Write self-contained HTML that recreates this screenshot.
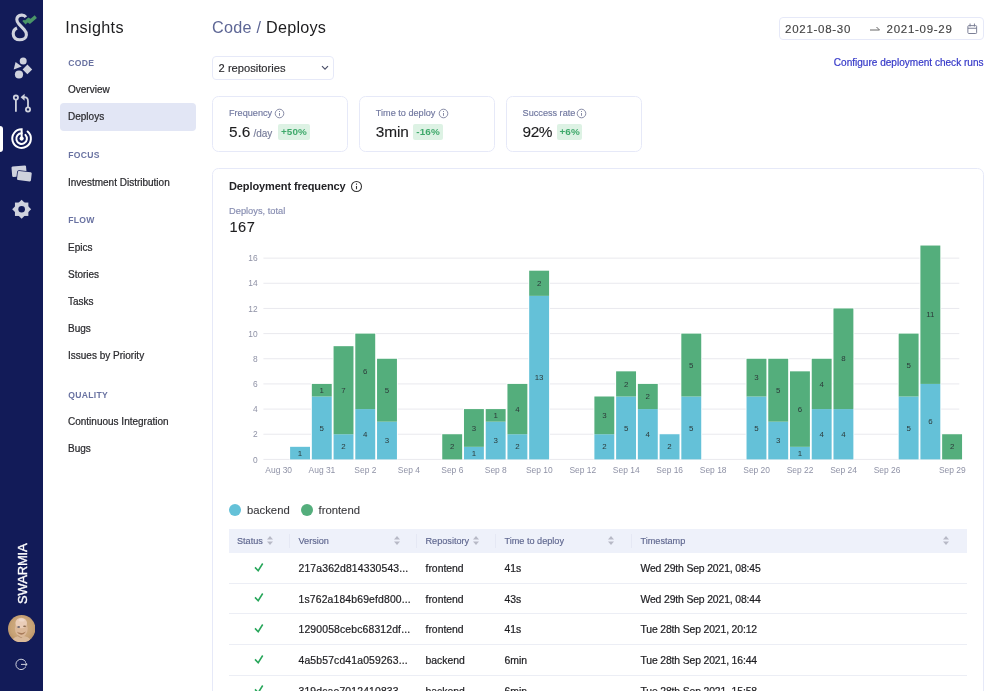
<!DOCTYPE html>
<html lang="en">
<head>
<meta charset="utf-8">
<title>Insights - Code / Deploys</title>
<style>
*{box-sizing:border-box;margin:0;padding:0}
html,body{width:1000px;height:691px;overflow:hidden;background:#fff}
#wrap{position:absolute;left:0;top:0;width:1000px;height:691px;will-change:transform}
body{font-family:"Liberation Sans",sans-serif;color:#222;position:relative;-webkit-font-smoothing:antialiased}
.abs{position:absolute}
/* left rail */
#rail{position:absolute;left:0;top:0;width:43.3px;height:691px;background:#121b58}
#rail svg{position:absolute}
#rail .active{position:absolute;left:0;top:125.6px;width:3.3px;height:26.8px;background:#fff;border-radius:0 3px 3px 0}
#brand{position:absolute;left:14.9px;top:603.6px;width:0;height:0;font-size:13px;font-weight:400;color:#fff;letter-spacing:-.15px;white-space:nowrap;-webkit-text-stroke:.35px #fff}
#brand{transform:rotate(-90deg);transform-origin:0 0}
#avatar{position:absolute;left:8px;top:614.7px;width:27.4px;height:27.4px;border-radius:50%;background:radial-gradient(circle at 52% 42%,#e6c9a8 0,#d9b48e 35%,#c69e77 60%,#b78d66 100%)}
/* sidebar */
#side{position:absolute;left:44px;top:0;width:160px;height:691px}
#side h1{position:absolute;left:21.3px;top:17.8px;font-size:16.2px;font-weight:400;color:#1d1d1f;letter-spacing:.35px;line-height:19px}
.sec{position:absolute;left:24.2px;font-size:8.6px;line-height:12px;font-weight:700;color:#6972a1;letter-spacing:.3px;white-space:nowrap}
.it{position:absolute;left:16px;width:136px;height:27px;line-height:27px;padding-left:8px;font-size:10px;color:#2a2a2e;border-radius:4px}
.hl{position:absolute;left:16px;top:103.3px;width:135.6px;height:27.4px;border-radius:4px;background:#e2e6f5}
/* main */
#title{position:absolute;left:212px;top:18px;font-size:16.2px;line-height:19px;letter-spacing:.25px;color:#1d1d1f;white-space:nowrap}
#title span{color:#5d6695}
#sel{position:absolute;left:212px;top:56px;width:122px;height:23.5px;border:1px solid #e6e9f8;border-radius:4px;font-size:11.15px;line-height:22px;padding-left:5.6px;color:#2a2a2e}
#date{position:absolute;left:778.5px;top:17px;width:205px;height:23px;border:1px solid #e6e9f8;border-radius:4px;font-size:11.5px;line-height:22.5px;color:#444;letter-spacing:.73px}
#cfg{position:absolute;right:16.5px;top:57.1px;font-size:10.05px;color:#3538c8;-webkit-text-stroke:.2px #3538c8;white-space:nowrap}
.card{position:absolute;top:96px;width:136px;height:56px;border:1px solid #e6e9f8;border-radius:6.5px}
.card .lb{position:absolute;left:16px;top:10.5px;font-size:9.15px;color:#70779f;white-space:nowrap}
.card .val{position:absolute;left:16px;top:26.4px;font-size:15.4px;color:#1d1d1f;white-space:nowrap;line-height:18px}
.card .unit{font-size:10px;color:#767b98}
.badge{position:absolute;top:27px;height:16px;line-height:16px;border-radius:2px;background:#ddf2e4;color:#3fa96b;font-size:9.9px;font-weight:700;text-align:center;letter-spacing:.15px}
#big{position:absolute;left:212px;top:168px;width:772px;height:560px;border:1px solid #e6e9f8;border-radius:6.5px}
#h2{position:absolute;left:229px;top:179.8px;font-size:11px;letter-spacing:-.1px;font-weight:700;color:#232326;white-space:nowrap}
#tot-l{position:absolute;left:229px;top:206px;font-size:9.3px;color:#868cb0;white-space:nowrap}
#tot{position:absolute;left:229.5px;top:219px;font-size:14.6px;color:#1d1d1f;letter-spacing:.5px}
#chart{position:absolute;left:0;top:0;width:1000px;height:691px;pointer-events:none}
#chart text{font-family:"Liberation Sans",sans-serif}
.yl{font-size:8.4px;fill:#8f92a6}
.xl{font-size:8.45px;fill:#8f92a6}
.bl{font-size:7.9px;fill:#2c3a3a}
.lg{position:absolute;top:503.5px;font-size:11.3px;color:#3a3a3e;white-space:nowrap}
.dot{position:absolute;top:504px;width:12px;height:12px;border-radius:50%}
#thead{position:absolute;left:229px;top:528.7px;width:738px;height:24.3px;background:#eef1fa}
.th{position:absolute;top:0;height:24px;line-height:24.5px;font-size:9.15px;color:#5f678f;white-space:nowrap}
.vd{position:absolute;top:5px;width:1px;height:14px;background:#e5e8f4}
.sort{position:absolute;top:7.5px;width:6px;height:9px}
.row{position:absolute;left:229px;width:738px;height:30.67px;border-bottom:1px solid #eceef5;font-size:10.4px;color:#1f1f23}
.row span{position:absolute;top:0;line-height:31px;white-space:nowrap}
.row span.v{letter-spacing:.15px}
.row span.ts{letter-spacing:-.14px}
.it,.row span{-webkit-text-stroke:.22px}
#sel,.th,#date,.card .lb,.card .unit,#tot-l{-webkit-text-stroke:.15px}
.lg,.card .val,#tot{-webkit-text-stroke:.12px}
.row svg{position:absolute;left:25.4px;top:8.8px}
</style>
</head>
<body>
<div id="wrap">

<div id="rail">
  <div class="active"></div>
  <svg style="left:0;top:0" width="44" height="691" viewBox="0 0 44 691">
  <!-- logo -->
  <path d="M25.9 17.2 C24.8 15.6 23.2 15 21.6 15.1 C18.9 15.3 16.9 17 16.8 19.4 C16.7 21.3 17.6 22.6 19 24.2 L24.2 29.6 C25.8 31.3 26.5 33 26.4 35 C26.2 38 23.3 39.8 19.7 39.8 C16 39.8 13.2 37.6 13.2 33.8 C13.2 31.1 14.6 29 17 28" fill="none" stroke="#cfd2dd" stroke-width="3.1" stroke-linecap="butt"/>
  <polygon points="22.3,20.9 25.5,24.4 27.7,22.5 29.9,24.1 36.9,18.1 34.7,15.2 30.6,18.7 28.3,17.4 25.2,20.3 23.6,20.0" fill="#4a9568"/>
  <!-- shapes -->
  <g fill="#cfd2dd">
    <circle cx="23.2" cy="61" r="3.5"/>
    <polygon points="15.6,62.1 21.7,66.5 13.7,69.4"/>
    <polygon points="27.4,64.6 32.2,69.4 27.4,74.2 22.6,69.4"/>
    <circle cx="19" cy="74.5" r="4.1"/>
  </g>
  <!-- pull request -->
  <g fill="none" stroke="#cfd2dd" stroke-width="1.8">
    <circle cx="15.9" cy="97.6" r="2.1"/>
    <path d="M15.9 100 V111.7"/>
    <circle cx="28" cy="109.4" r="2.1"/>
    <path d="M28 107 V101.2 C28 98.6 26.6 97.2 24 97.2 H23"/>
  </g>
  <polygon points="20.6,97.2 24.6,93.7 24.6,100.7" fill="#cfd2dd"/>
  <!-- radar (active) -->
  <g fill="none" stroke="#fff" stroke-width="2" stroke-linecap="round">
    <path d="M27.6 131.5 A9.3 9.3 0 1 1 21.65 129.3 V138.6" stroke-linejoin="miter"/>
    <path d="M25.4 134.9 A5.3 5.3 0 1 1 21.65 133.3"/>
  </g>
  <circle cx="21.65" cy="138.6" r="2.1" fill="#fff"/>
  <!-- cards -->
  <g fill="#cfd2dd">
    <rect x="11.8" y="166" width="14.6" height="10.6" rx="1.2" transform="rotate(-5 19 171)"/>
    <rect x="17.4" y="171.6" width="14" height="9.2" rx="1.2" transform="rotate(6.5 24.4 176.2)" stroke="#121b58" stroke-width="1.6" paint-order="stroke"/>
  </g>
  <!-- gear -->
  <g fill="#cfd2dd">
    <rect x="14.95" y="202.55" width="13.4" height="13.4"/>
    <rect x="14.95" y="202.55" width="13.4" height="13.4" transform="rotate(45 21.65 209.25)"/>
  </g>
  <circle cx="21.65" cy="209.25" r="3.3" fill="#121b58"/>
  <!-- logout -->
  <g fill="none" stroke="#cfd2dd" stroke-width="1">
    <path d="M25.6 661.8 A5.2 5.2 0 1 0 25.6 667"/>
    <path d="M21 664.4 H27 M25 662.4 L27.2 664.4 L25 666.4"/>
  </g>
</svg>

  <div id="brand">SWARMIA</div>
  <svg style="left:8px;top:614.6px" width="27.4" height="27.4" viewBox="0 0 27.4 27.4">
    <defs><clipPath id="avc"><circle cx="13.7" cy="13.7" r="13.7"/></clipPath>
    <radialGradient id="avg" cx="50%" cy="45%" r="55%"><stop offset="0" stop-color="#d3b086"/><stop offset=".7" stop-color="#c8a377"/><stop offset="1" stop-color="#ba9468"/></radialGradient></defs>
    <g clip-path="url(#avc)">
      <rect width="27.4" height="27.4" fill="url(#avg)"/>
      <ellipse cx="13.4" cy="25.5" rx="9" ry="4.5" fill="#d9b99a"/>
      <ellipse cx="13.3" cy="13.5" rx="6.4" ry="8.6" fill="#dcb99a"/>
      <ellipse cx="13.2" cy="8" rx="5.8" ry="5.2" fill="#eacdb8"/>
      <ellipse cx="13.6" cy="5" rx="3" ry="1.6" fill="#f0d9c9"/>
      <ellipse cx="10.7" cy="12" rx="1.5" ry=".8" fill="#4a4a5c"/>
      <ellipse cx="16.6" cy="11.2" rx="1.6" ry=".8" fill="#8a6a50"/>
      <path d="M8.8 16.6 C10.5 20.5 15.5 21 18 16.2 C16 18.3 11.5 18.8 8.8 16.6Z" fill="#a87c5a"/>
      <path d="M9.2 19.5 C10.5 22.5 13 23.2 14.5 22.5 C12.5 22 10.5 21 9.2 19.5Z" fill="#b08865"/>
    </g>
  </svg>

</div>

<div id="side">
  <h1>Insights</h1>
  <div class="hl"></div>
  <div class="sec" style="top:56.9px">CODE</div>
  <div class="it" style="top:76px">Overview</div>
  <div class="it" style="top:103px">Deploys</div>
  <div class="sec" style="top:149.2px">FOCUS</div>
  <div class="it" style="top:169px">Investment Distribution</div>
  <div class="sec" style="top:214.2px">FLOW</div>
  <div class="it" style="top:234px">Epics</div>
  <div class="it" style="top:261px">Stories</div>
  <div class="it" style="top:288px">Tasks</div>
  <div class="it" style="top:315px">Bugs</div>
  <div class="it" style="top:342px">Issues by Priority</div>
  <div class="sec" style="top:388.6px">QUALITY</div>
  <div class="it" style="top:408px">Continuous Integration</div>
  <div class="it" style="top:435px">Bugs</div>
</div>

<div id="title"><span>Code /</span> Deploys</div>
<div id="sel">2 repositories
  <svg class="abs" style="left:108px;top:7.8px" width="8" height="6" viewBox="0 0 8 6"><path d="M1 1.2 L4 4.2 L7 1.2" fill="none" stroke="#4a4f68" stroke-width="1.15"/></svg>
</div>

<div id="date">
  <span class="abs" style="left:5.5px;top:0">2021-08-30</span>
  <span class="abs" style="left:107px;top:0">2021-09-29</span>
  <svg class="abs" style="left:89px;top:7px" width="12" height="8" viewBox="0 0 12 8"><path d="M1 5 H10.5 L7.5 2" fill="none" stroke="#666" stroke-width="1"/></svg>
  <svg class="abs" style="left:187.5px;top:5px" width="10.5" height="11.4" viewBox="0 0 12 13"><rect x="1" y="3" width="10" height="9" rx="1" fill="none" stroke="#777b92" stroke-width="1.1"/><path d="M1 6 H11 M3.5 .6 V4 M8.5 .6 V4" stroke="#777b92" stroke-width="1.1" fill="none"/></svg>
</div>
<div id="cfg">Configure deployment check runs</div>

<div class="card" style="left:212px">
  <div class="lb">Frequency</div>
  <svg class="abs" style="left:60.5px;top:10.5px" width="11" height="11" viewBox="0 0 11 11"><circle cx="5.5" cy="5.5" r="4.3" fill="none" stroke="#7a7f9c" stroke-width=".9"/><path d="M5.5 5 V7.8 M5.5 3 V4" stroke="#7a7f9c" stroke-width=".9"/></svg>
  <div class="val">5.6<span class="unit" style="margin-left:3px">/day</span></div>
  <div class="badge" style="left:65px;width:32px">+50%</div>
</div>
<div class="card" style="left:358.8px">
  <div class="lb">Time to deploy</div>
  <svg class="abs" style="left:77.8px;top:10.5px" width="11" height="11" viewBox="0 0 11 11"><circle cx="5.5" cy="5.5" r="4.3" fill="none" stroke="#7a7f9c" stroke-width=".9"/><path d="M5.5 5 V7.8 M5.5 3 V4" stroke="#7a7f9c" stroke-width=".9"/></svg>
  <div class="val" style="letter-spacing:-.15px">3min</div>
  <div class="badge" style="left:53.3px;width:30px">-16%</div>
</div>
<div class="card" style="left:505.6px">
  <div class="lb">Success rate</div>
  <svg class="abs" style="left:69.8px;top:10.5px" width="11" height="11" viewBox="0 0 11 11"><circle cx="5.5" cy="5.5" r="4.3" fill="none" stroke="#7a7f9c" stroke-width=".9"/><path d="M5.5 5 V7.8 M5.5 3 V4" stroke="#7a7f9c" stroke-width=".9"/></svg>
  <div class="val" style="letter-spacing:-.5px">92%</div>
  <div class="badge" style="left:50.3px;width:25.5px">+6%</div>
</div>

<div id="big"></div>
<div id="h2">Deployment frequency</div>
<svg class="abs" style="left:350px;top:180px" width="13" height="13" viewBox="0 0 13 13"><circle cx="6.5" cy="6.5" r="5" fill="none" stroke="#333" stroke-width="1.05"/><path d="M6.5 6 V9.3 M6.5 3.6 V4.8" stroke="#333" stroke-width="1.1"/></svg>
<div id="tot-l">Deploys, total</div>
<div id="tot">167</div>

<svg id="chart" viewBox="0 0 1000 691">
<line x1="263.4" x2="959.3" y1="459.40" y2="459.40" stroke="#e9e9ee" stroke-width="1"/>
<text x="257.6" y="462.50" text-anchor="end" class="yl">0</text>
<line x1="263.4" x2="959.3" y1="434.24" y2="434.24" stroke="#e9e9ee" stroke-width="1"/>
<text x="257.6" y="437.34" text-anchor="end" class="yl">2</text>
<line x1="263.4" x2="959.3" y1="409.08" y2="409.08" stroke="#e9e9ee" stroke-width="1"/>
<text x="257.6" y="412.18" text-anchor="end" class="yl">4</text>
<line x1="263.4" x2="959.3" y1="383.92" y2="383.92" stroke="#e9e9ee" stroke-width="1"/>
<text x="257.6" y="387.02" text-anchor="end" class="yl">6</text>
<line x1="263.4" x2="959.3" y1="358.76" y2="358.76" stroke="#e9e9ee" stroke-width="1"/>
<text x="257.6" y="361.86" text-anchor="end" class="yl">8</text>
<line x1="263.4" x2="959.3" y1="333.60" y2="333.60" stroke="#e9e9ee" stroke-width="1"/>
<text x="257.6" y="336.70" text-anchor="end" class="yl">10</text>
<line x1="263.4" x2="959.3" y1="308.44" y2="308.44" stroke="#e9e9ee" stroke-width="1"/>
<text x="257.6" y="311.54" text-anchor="end" class="yl">12</text>
<line x1="263.4" x2="959.3" y1="283.28" y2="283.28" stroke="#e9e9ee" stroke-width="1"/>
<text x="257.6" y="286.38" text-anchor="end" class="yl">14</text>
<line x1="263.4" x2="959.3" y1="258.12" y2="258.12" stroke="#e9e9ee" stroke-width="1"/>
<text x="257.6" y="261.22" text-anchor="end" class="yl">16</text>
<rect x="289.20" y="445.92" width="21.70" height="13.48" fill="#fff"/>
<rect x="290.10" y="446.82" width="19.9" height="12.58" fill="#64c1d8"/>
<text x="300.05" y="455.71" text-anchor="middle" class="bl">1</text>
<rect x="310.94" y="383.02" width="21.70" height="76.38" fill="#fff"/>
<rect x="311.84" y="396.50" width="19.9" height="62.90" fill="#64c1d8"/>
<text x="321.79" y="430.55" text-anchor="middle" class="bl">5</text>
<rect x="311.84" y="383.92" width="19.9" height="12.58" fill="#54ae7c"/>
<text x="321.79" y="392.81" text-anchor="middle" class="bl">1</text>
<rect x="332.67" y="345.28" width="21.70" height="114.12" fill="#fff"/>
<rect x="333.57" y="434.24" width="19.9" height="25.16" fill="#64c1d8"/>
<text x="343.52" y="449.42" text-anchor="middle" class="bl">2</text>
<rect x="333.57" y="346.18" width="19.9" height="88.06" fill="#54ae7c"/>
<text x="343.52" y="392.81" text-anchor="middle" class="bl">7</text>
<rect x="354.41" y="332.70" width="21.70" height="126.70" fill="#fff"/>
<rect x="355.31" y="409.08" width="19.9" height="50.32" fill="#64c1d8"/>
<text x="365.25" y="436.84" text-anchor="middle" class="bl">4</text>
<rect x="355.31" y="333.60" width="19.9" height="75.48" fill="#54ae7c"/>
<text x="365.25" y="373.94" text-anchor="middle" class="bl">6</text>
<rect x="376.14" y="357.86" width="21.70" height="101.54" fill="#fff"/>
<rect x="377.04" y="421.66" width="19.9" height="37.74" fill="#64c1d8"/>
<text x="386.99" y="443.13" text-anchor="middle" class="bl">3</text>
<rect x="377.04" y="358.76" width="19.9" height="62.90" fill="#54ae7c"/>
<text x="386.99" y="392.81" text-anchor="middle" class="bl">5</text>
<rect x="441.35" y="433.34" width="21.70" height="26.06" fill="#fff"/>
<rect x="442.25" y="434.24" width="19.9" height="25.16" fill="#54ae7c"/>
<text x="452.19" y="449.42" text-anchor="middle" class="bl">2</text>
<rect x="463.08" y="408.18" width="21.70" height="51.22" fill="#fff"/>
<rect x="463.98" y="446.82" width="19.9" height="12.58" fill="#64c1d8"/>
<text x="473.93" y="455.71" text-anchor="middle" class="bl">1</text>
<rect x="463.98" y="409.08" width="19.9" height="37.74" fill="#54ae7c"/>
<text x="473.93" y="430.55" text-anchor="middle" class="bl">3</text>
<rect x="484.82" y="408.18" width="21.70" height="51.22" fill="#fff"/>
<rect x="485.72" y="421.66" width="19.9" height="37.74" fill="#64c1d8"/>
<text x="495.67" y="443.13" text-anchor="middle" class="bl">3</text>
<rect x="485.72" y="409.08" width="19.9" height="12.58" fill="#54ae7c"/>
<text x="495.67" y="417.97" text-anchor="middle" class="bl">1</text>
<rect x="506.55" y="383.02" width="21.70" height="76.38" fill="#fff"/>
<rect x="507.45" y="434.24" width="19.9" height="25.16" fill="#64c1d8"/>
<text x="517.40" y="449.42" text-anchor="middle" class="bl">2</text>
<rect x="507.45" y="383.92" width="19.9" height="50.32" fill="#54ae7c"/>
<text x="517.40" y="411.68" text-anchor="middle" class="bl">4</text>
<rect x="528.28" y="269.80" width="21.70" height="189.60" fill="#fff"/>
<rect x="529.18" y="295.86" width="19.9" height="163.54" fill="#64c1d8"/>
<text x="539.13" y="380.23" text-anchor="middle" class="bl">13</text>
<rect x="529.18" y="270.70" width="19.9" height="25.16" fill="#54ae7c"/>
<text x="539.13" y="285.88" text-anchor="middle" class="bl">2</text>
<rect x="593.49" y="395.60" width="21.70" height="63.80" fill="#fff"/>
<rect x="594.39" y="434.24" width="19.9" height="25.16" fill="#64c1d8"/>
<text x="604.34" y="449.42" text-anchor="middle" class="bl">2</text>
<rect x="594.39" y="396.50" width="19.9" height="37.74" fill="#54ae7c"/>
<text x="604.34" y="417.97" text-anchor="middle" class="bl">3</text>
<rect x="615.23" y="370.44" width="21.70" height="88.96" fill="#fff"/>
<rect x="616.12" y="396.50" width="19.9" height="62.90" fill="#64c1d8"/>
<text x="626.08" y="430.55" text-anchor="middle" class="bl">5</text>
<rect x="616.12" y="371.34" width="19.9" height="25.16" fill="#54ae7c"/>
<text x="626.08" y="386.52" text-anchor="middle" class="bl">2</text>
<rect x="636.96" y="383.02" width="21.70" height="76.38" fill="#fff"/>
<rect x="637.86" y="409.08" width="19.9" height="50.32" fill="#64c1d8"/>
<text x="647.81" y="436.84" text-anchor="middle" class="bl">4</text>
<rect x="637.86" y="383.92" width="19.9" height="25.16" fill="#54ae7c"/>
<text x="647.81" y="399.10" text-anchor="middle" class="bl">2</text>
<rect x="658.70" y="433.34" width="21.70" height="26.06" fill="#fff"/>
<rect x="659.60" y="434.24" width="19.9" height="25.16" fill="#64c1d8"/>
<text x="669.55" y="449.42" text-anchor="middle" class="bl">2</text>
<rect x="680.43" y="332.70" width="21.70" height="126.70" fill="#fff"/>
<rect x="681.33" y="396.50" width="19.9" height="62.90" fill="#64c1d8"/>
<text x="691.28" y="430.55" text-anchor="middle" class="bl">5</text>
<rect x="681.33" y="333.60" width="19.9" height="62.90" fill="#54ae7c"/>
<text x="691.28" y="367.65" text-anchor="middle" class="bl">5</text>
<rect x="745.63" y="357.86" width="21.70" height="101.54" fill="#fff"/>
<rect x="746.53" y="396.50" width="19.9" height="62.90" fill="#64c1d8"/>
<text x="756.49" y="430.55" text-anchor="middle" class="bl">5</text>
<rect x="746.53" y="358.76" width="19.9" height="37.74" fill="#54ae7c"/>
<text x="756.49" y="380.23" text-anchor="middle" class="bl">3</text>
<rect x="767.37" y="357.86" width="21.70" height="101.54" fill="#fff"/>
<rect x="768.27" y="421.66" width="19.9" height="37.74" fill="#64c1d8"/>
<text x="778.22" y="443.13" text-anchor="middle" class="bl">3</text>
<rect x="768.27" y="358.76" width="19.9" height="62.90" fill="#54ae7c"/>
<text x="778.22" y="392.81" text-anchor="middle" class="bl">5</text>
<rect x="789.10" y="370.44" width="21.70" height="88.96" fill="#fff"/>
<rect x="790.00" y="446.82" width="19.9" height="12.58" fill="#64c1d8"/>
<text x="799.95" y="455.71" text-anchor="middle" class="bl">1</text>
<rect x="790.00" y="371.34" width="19.9" height="75.48" fill="#54ae7c"/>
<text x="799.95" y="411.68" text-anchor="middle" class="bl">6</text>
<rect x="810.84" y="357.86" width="21.70" height="101.54" fill="#fff"/>
<rect x="811.74" y="409.08" width="19.9" height="50.32" fill="#64c1d8"/>
<text x="821.69" y="436.84" text-anchor="middle" class="bl">4</text>
<rect x="811.74" y="358.76" width="19.9" height="50.32" fill="#54ae7c"/>
<text x="821.69" y="386.52" text-anchor="middle" class="bl">4</text>
<rect x="832.57" y="307.54" width="21.70" height="151.86" fill="#fff"/>
<rect x="833.47" y="409.08" width="19.9" height="50.32" fill="#64c1d8"/>
<text x="843.42" y="436.84" text-anchor="middle" class="bl">4</text>
<rect x="833.47" y="308.44" width="19.9" height="100.64" fill="#54ae7c"/>
<text x="843.42" y="361.36" text-anchor="middle" class="bl">8</text>
<rect x="897.78" y="332.70" width="21.70" height="126.70" fill="#fff"/>
<rect x="898.68" y="396.50" width="19.9" height="62.90" fill="#64c1d8"/>
<text x="908.63" y="430.55" text-anchor="middle" class="bl">5</text>
<rect x="898.68" y="333.60" width="19.9" height="62.90" fill="#54ae7c"/>
<text x="908.63" y="367.65" text-anchor="middle" class="bl">5</text>
<rect x="919.51" y="244.64" width="21.70" height="214.76" fill="#fff"/>
<rect x="920.41" y="383.92" width="19.9" height="75.48" fill="#64c1d8"/>
<text x="930.37" y="424.26" text-anchor="middle" class="bl">6</text>
<rect x="920.41" y="245.54" width="19.9" height="138.38" fill="#54ae7c"/>
<text x="930.37" y="317.33" text-anchor="middle" class="bl">11</text>
<rect x="941.25" y="433.34" width="21.70" height="26.06" fill="#fff"/>
<rect x="942.15" y="434.24" width="19.9" height="25.16" fill="#54ae7c"/>
<text x="952.10" y="449.42" text-anchor="middle" class="bl">2</text>
<text x="278.7" y="473.3" text-anchor="middle" class="xl">Aug 30</text>
<text x="321.94" y="473.3" text-anchor="middle" class="xl">Aug 31</text>
<text x="365.4" y="473.3" text-anchor="middle" class="xl">Sep 2</text>
<text x="408.88" y="473.3" text-anchor="middle" class="xl">Sep 4</text>
<text x="452.34" y="473.3" text-anchor="middle" class="xl">Sep 6</text>
<text x="495.81" y="473.3" text-anchor="middle" class="xl">Sep 8</text>
<text x="539.28" y="473.3" text-anchor="middle" class="xl">Sep 10</text>
<text x="582.75" y="473.3" text-anchor="middle" class="xl">Sep 12</text>
<text x="626.23" y="473.3" text-anchor="middle" class="xl">Sep 14</text>
<text x="669.7" y="473.3" text-anchor="middle" class="xl">Sep 16</text>
<text x="713.16" y="473.3" text-anchor="middle" class="xl">Sep 18</text>
<text x="756.63" y="473.3" text-anchor="middle" class="xl">Sep 20</text>
<text x="800.1" y="473.3" text-anchor="middle" class="xl">Sep 22</text>
<text x="843.57" y="473.3" text-anchor="middle" class="xl">Sep 24</text>
<text x="887.04" y="473.3" text-anchor="middle" class="xl">Sep 26</text>
<text x="952.25" y="473.3" text-anchor="middle" class="xl">Sep 29</text>
</svg>

<div class="dot" style="left:229px;background:#64c1d8"></div>
<div class="lg" style="left:247px">backend</div>
<div class="dot" style="left:301px;background:#54ae7c"></div>
<div class="lg" style="left:318.5px">frontend</div>

<div id="thead">
  <div class="th" style="left:8px">Status</div>
  <div class="th" style="left:69.5px">Version</div>
  <div class="th" style="left:196.5px">Repository</div>
  <div class="th" style="left:275.5px">Time to deploy</div>
  <div class="th" style="left:411.5px">Timestamp</div>
  <div class="vd" style="left:60.3px"></div>
  <div class="vd" style="left:186.6px"></div>
  <div class="vd" style="left:265.6px"></div>
  <div class="vd" style="left:401.6px"></div>
  <svg class="sort" style="left:37.8px" viewBox="0 0 6 9"><path d="M0 3.6 L3 0 L6 3.6Z M0 5.4 L3 9 L6 5.4Z" fill="#b7b9c6"/></svg>
  <svg class="sort" style="left:164.6px" viewBox="0 0 6 9"><path d="M0 3.6 L3 0 L6 3.6Z M0 5.4 L3 9 L6 5.4Z" fill="#b7b9c6"/></svg>
  <svg class="sort" style="left:243.6px" viewBox="0 0 6 9"><path d="M0 3.6 L3 0 L6 3.6Z M0 5.4 L3 9 L6 5.4Z" fill="#b7b9c6"/></svg>
  <svg class="sort" style="left:379.2px" viewBox="0 0 6 9"><path d="M0 3.6 L3 0 L6 3.6Z M0 5.4 L3 9 L6 5.4Z" fill="#b7b9c6"/></svg>
  <svg class="sort" style="left:714.2px" viewBox="0 0 6 9"><path d="M0 3.6 L3 0 L6 3.6Z M0 5.4 L3 9 L6 5.4Z" fill="#b7b9c6"/></svg>
</div>

<div class="row" style="top:553px">
  <svg width="11" height="11" viewBox="0 0 11 11"><path d="M1 5.4 L4.2 8.7 L8.7 1.5" fill="none" stroke="#27a65a" stroke-width="1.55"/></svg>
  <span class="v" style="left:69.5px">217a362d814330543...</span><span style="left:196.5px">frontend</span><span style="left:275.5px">41s</span><span class="ts" style="left:411.5px">Wed 29th Sep 2021, 08:45</span>
</div>
<div class="row" style="top:583.67px">
  <svg width="11" height="11" viewBox="0 0 11 11"><path d="M1 5.4 L4.2 8.7 L8.7 1.5" fill="none" stroke="#27a65a" stroke-width="1.55"/></svg>
  <span class="v" style="left:69.5px">1s762a184b69efd800...</span><span style="left:196.5px">frontend</span><span style="left:275.5px">43s</span><span class="ts" style="left:411.5px">Wed 29th Sep 2021, 08:44</span>
</div>
<div class="row" style="top:614.33px">
  <svg width="11" height="11" viewBox="0 0 11 11"><path d="M1 5.4 L4.2 8.7 L8.7 1.5" fill="none" stroke="#27a65a" stroke-width="1.55"/></svg>
  <span class="v" style="left:69.5px">1290058cebc68312df...</span><span style="left:196.5px">frontend</span><span style="left:275.5px">41s</span><span class="ts" style="left:411.5px">Tue 28th Sep 2021, 20:12</span>
</div>
<div class="row" style="top:645px">
  <svg width="11" height="11" viewBox="0 0 11 11"><path d="M1 5.4 L4.2 8.7 L8.7 1.5" fill="none" stroke="#27a65a" stroke-width="1.55"/></svg>
  <span class="v" style="left:69.5px">4a5b57cd41a059263...</span><span style="left:196.5px">backend</span><span style="left:275.5px">6min</span><span class="ts" style="left:411.5px">Tue 28th Sep 2021, 16:44</span>
</div>
<div class="row" style="top:675.67px">
  <svg width="11" height="11" viewBox="0 0 11 11"><path d="M1 5.4 L4.2 8.7 L8.7 1.5" fill="none" stroke="#27a65a" stroke-width="1.55"/></svg>
  <span class="v" style="left:69.5px">319dcae7012410833...</span><span style="left:196.5px">backend</span><span style="left:275.5px">6min</span><span class="ts" style="left:411.5px">Tue 28th Sep 2021, 15:58</span>
</div>

</div>
</body>
</html>
